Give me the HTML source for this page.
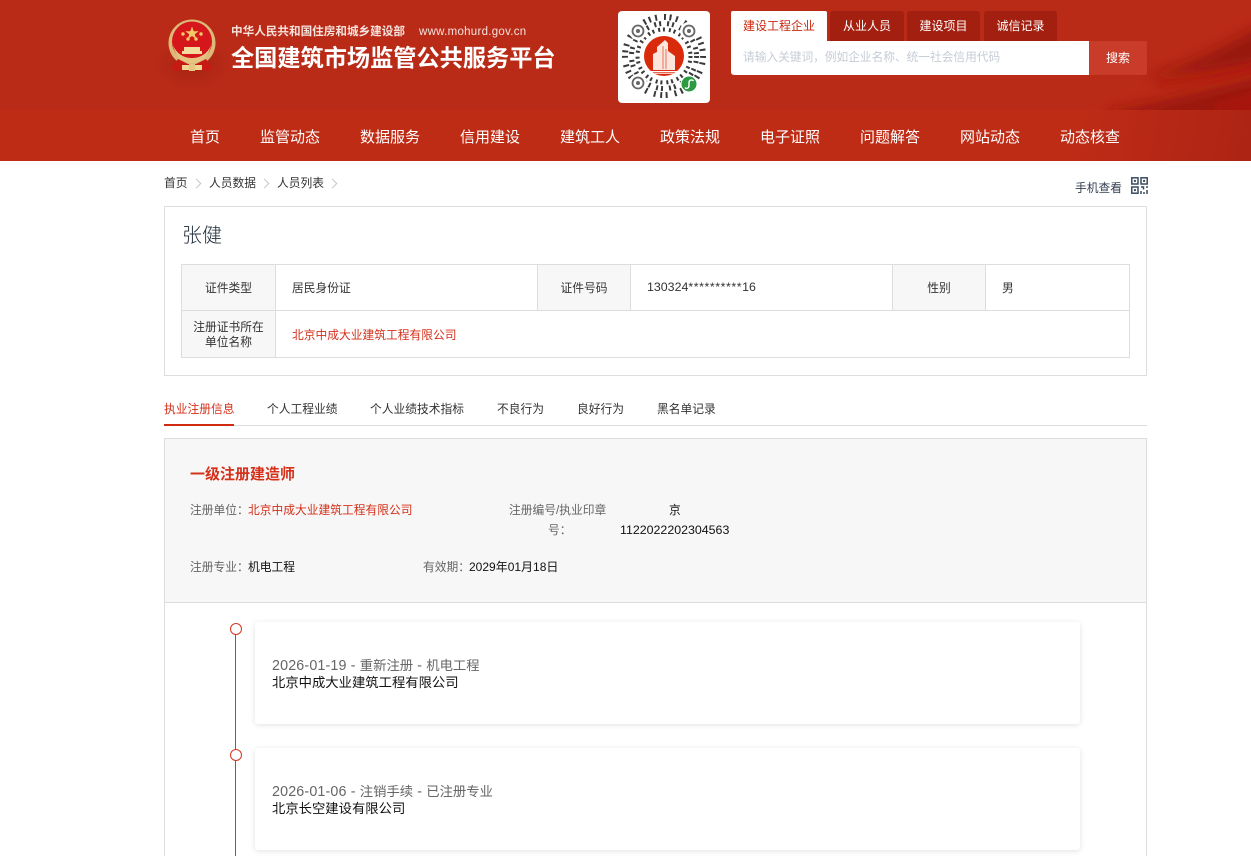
<!DOCTYPE html>
<html lang="zh-CN">
<head>
<meta charset="utf-8">
<title>全国建筑市场监管公共服务平台</title>
<style>
*{margin:0;padding:0;box-sizing:border-box}
html,body{width:1251px;height:856px;overflow:hidden;background:#fff}
body{position:relative;font-family:"Liberation Sans","Noto Sans CJK SC",sans-serif;font-size:11.75px;color:#333}
.a{position:absolute;white-space:nowrap}
.t{line-height:16px}
#hd{position:absolute;left:0;top:0;width:1251px;height:110px;background:#b92a17;overflow:hidden}
#nav{position:absolute;left:0;top:110px;width:1251px;height:51px;background:linear-gradient(100deg,#bf2c16 0,#bf2c16 85%,#ad2414 100%)}
#nav span{position:absolute;top:0;line-height:55px;font-size:15px;color:#fff;white-space:nowrap}
.tab{position:absolute;top:11px;height:30px;background:#a31f10;border-radius:3px 3px 0 0;color:#fff;text-align:center;line-height:31px;font-size:12px}
.b{position:absolute;background:#ddd}
.cell{position:absolute;display:flex;align-items:center;justify-content:center;text-align:center;background:#f7f7f7;color:#333;line-height:15px;padding-top:1px}
.red{color:#d5301a}
.lab{color:#666}
.k{color:#111}
.card{position:absolute;left:255px;width:825px;height:102px;background:#fff;border-radius:3px;box-shadow:0 1px 6px rgba(0,0,0,.12)}
.card div{position:absolute;left:17px;white-space:nowrap;font-size:13.33px;line-height:17px}
.card b{font-weight:400;font-size:14.3px;letter-spacing:.15px}
.chev{position:absolute;width:7px;height:7px;border-top:1px solid #c8c8c8;border-right:1px solid #c8c8c8;transform:rotate(45deg);top:179.5px}
</style>
</head>
<body>
<div id="hd">
<svg class="a" style="left:0;top:0" width="1251" height="110" viewBox="0 0 1251 110">
<defs>
<filter id="bl" x="-20%" y="-50%" width="140%" height="200%"><feGaussianBlur stdDeviation="6"/></filter>
<filter id="bs" x="-20%" y="-50%" width="140%" height="200%"><feGaussianBlur stdDeviation="3"/></filter>
<radialGradient id="gl"><stop offset="0" stop-color="#8e1a0c" stop-opacity=".4"/><stop offset="1" stop-color="#8e1a0c" stop-opacity="0"/></radialGradient>
</defs>
<path d="M1150 76C1190 66 1225 46 1270 22V60C1225 70 1190 74 1150 78Z" fill="#941709" opacity=".9" filter="url(#bl)"/>
<path d="M1110 112C1170 100 1215 88 1270 74V120H1110Z" fill="#981809" opacity=".9" filter="url(#bl)"/>
<path d="M1160 84C1190 80 1220 72 1260 62V68C1225 76 1190 84 1160 87Z" fill="#ad160c" opacity=".8" filter="url(#bs)"/>
<path d="M1215 102C1230 98 1245 94 1260 90V115H1215Z" fill="#aa120a" opacity=".8" filter="url(#bs)"/>
<ellipse cx="192" cy="64" rx="38" ry="26" fill="url(#gl)"/>
</svg>
<svg class="a" style="left:166px;top:18px" width="52" height="56" viewBox="0 0 52 56">
<circle cx="26" cy="25" r="23.5" fill="#dcb978"/>
<circle cx="26" cy="23.500" r="20" fill="#d5161a"/>
<path d="M7 27c2 11 10 18 19 18s17-7 19-18c-3 8-10 13-19 13S10 35 7 27Z" fill="#e6c583"/>
<path d="M26 8.500l1.700 4.700h5l-4 3 1.500 4.800-4.200-3-4.200 3 1.500-4.800-4-3h5Z" fill="#f0c968"/>
<circle cx="17" cy="16" r="1.700" fill="#f0c968"/><circle cx="35" cy="16" r="1.700" fill="#f0c968"/>
<circle cx="22" cy="21" r="1.700" fill="#f0c968"/><circle cx="30" cy="21" r="1.700" fill="#f0c968"/>
<path d="M16 36h20v-3h-2v-4H18v4h-2Z" fill="#f3dc9e"/>
<path d="M12 41l-7 9 6 3 8-3h14l8 3 6-3-7-9-10 5H22Z" fill="#c81a14"/>
<rect x="16" y="47" width="20" height="5" fill="#f0d591"/>
<rect x="23" y="46" width="6" height="7" fill="#e6c583"/>
</svg>
<div class="a" style="left:231px;top:23px;font-size:11.6px;line-height:17px;color:#f6e3dd;font-weight:700">中华人民共和国住房和城乡建设部</div>
<div class="a" style="left:419px;top:24px;font-size:11.5px;letter-spacing:.28px;line-height:17px;color:#f6e3dd">www.mohurd.gov.cn</div>
<div class="a" style="left:231px;top:42px;font-size:23.2px;line-height:33px;color:#fff;font-weight:700">全国建筑市场监管公共服务平台</div>

<div class="a" style="left:618px;top:11px;width:92px;height:92px;background:#fff;border-radius:4px"></div>
<svg class="a" style="left:618px;top:11px" width="92" height="92" viewBox="0 0 92 92" fill="none">
<circle cx="46" cy="45" r="39" stroke="#3a3a3a" stroke-width="6" stroke-dasharray="2 4.500 2 7 2 3.500"/>
<circle cx="46" cy="45" r="32.500" stroke="#3a3a3a" stroke-width="5" stroke-dasharray="2 3 2 6"/>
<circle cx="46" cy="45" r="26.500" stroke="#3a3a3a" stroke-width="4" stroke-dasharray="2 2.800 2 4"/>
<circle cx="46" cy="45" r="23" fill="#fff"/>
<circle cx="46" cy="45" r="20" fill="#d92a0c"/>
<path d="M35 59V43l4-2V36l8-7 3 3V40l7 5V59Z" fill="#fbe5dc"/>
<path d="M45 35v23M48 38v20" stroke="#e8735c" stroke-width="1"/>
<rect x="33" y="60" width="26" height="1.300" fill="#fff"/>
<rect x="36" y="62" width="20" height="1" fill="#f6c4b6"/>
<circle cx="20" cy="20" r="9" fill="#fff"/>
<circle cx="20" cy="20" r="5.500" stroke="#666" stroke-width="1.800"/><circle cx="20" cy="20" r="2" fill="#666"/>
<circle cx="71" cy="20" r="9" fill="#fff"/>
<circle cx="71" cy="20" r="5.500" stroke="#666" stroke-width="1.800"/><circle cx="71" cy="20" r="2" fill="#666"/>
<circle cx="20" cy="72" r="9" fill="#fff"/>
<circle cx="20" cy="72" r="5.500" stroke="#666" stroke-width="1.800"/><circle cx="20" cy="72" r="2" fill="#666"/>
<circle cx="71" cy="73" r="8.500" fill="#fff"/>
<circle cx="71" cy="73" r="7.500" fill="#2b9a41"/>
<path d="M67 76.500c1.500 2 4 .5 4-2v-3c0-2.500 3-3.500 4.500-1.500" stroke="#fff" stroke-width="1.400"/>
</svg>

<div class="tab" style="left:731px;width:96px;background:#fff;color:#c9290f;border-radius:2px 2px 0 0">建设工程企业</div>
<div class="tab" style="left:830px;width:74px">从业人员</div>
<div class="tab" style="left:907px;width:73px">建设项目</div>
<div class="tab" style="left:984px;width:73px">诚信记录</div>
<div class="a" style="left:731px;top:41px;width:358px;height:34px;background:#fff;border-radius:0 0 0 3px"></div>
<div class="a" style="left:743px;top:49px;line-height:17px;font-size:11.7px;color:#c6ccd6">请输入关键词&#xFF0C;例如企业名称、统一社会信用代码</div>
<div class="a" style="left:1089px;top:41px;width:58px;height:34px;background:#c93c2a;border-radius:0 2px 2px 0;color:#fff;text-align:center;line-height:34px;font-size:12px">搜索</div>
</div>

<div id="nav">
<span style="left:190px">首页</span><span style="left:260px">监管动态</span><span style="left:360px">数据服务</span><span style="left:460px">信用建设</span><span style="left:560px">建筑工人</span><span style="left:660px">政策法规</span><span style="left:760px">电子证照</span><span style="left:860px">问题解答</span><span style="left:960px">网站动态</span><span style="left:1060px">动态核查</span>
</div>

<div class="a t" style="left:164px;top:176px">首页</div><i class="chev" style="left:193px"></i>
<div class="a t" style="left:209px;top:176px">人员数据</div><i class="chev" style="left:261px"></i>
<div class="a t" style="left:277px;top:176px">人员列表</div><i class="chev" style="left:329px"></i>
<div class="a t" style="left:1075px;top:181px;color:#333f50">手机查看</div>
<svg class="a" style="left:1131px;top:177px" width="17" height="17" viewBox="0 0 17 17" fill="none" stroke="#3b4a5e" stroke-width="1.500">
<rect x=".8" y=".8" width="6.200" height="6.200"/><rect x="10" y=".8" width="6.200" height="6.200"/><rect x=".8" y="10" width="6.200" height="6.200"/>
<rect x="2.900" y="2.900" width="2" height="2" fill="#3b4a5e" stroke="none"/><rect x="12.100" y="2.900" width="2" height="2" fill="#3b4a5e" stroke="none"/><rect x="2.900" y="12.100" width="2" height="2" fill="#3b4a5e" stroke="none"/>
<path d="M10 10h2.500v2.500M15 10h2M10 14v3M13 15v2M16 13v4"/>
</svg>

<div class="a" style="left:164px;top:206px;width:983px;height:170px;border:1px solid #ddd"></div>
<div class="a" style="left:182px;top:222px;font-size:20px;line-height:29px;color:#1f2b3a;font-weight:300">张健</div>

<div class="cell" style="left:182px;top:265px;width:93px;height:45px">证件类型</div>
<div class="cell" style="left:538px;top:265px;width:92px;height:45px">证件号码</div>
<div class="cell" style="left:893px;top:265px;width:92px;height:45px">性别</div>
<div class="cell" style="left:182px;top:311px;width:93px;height:46px">注册证书所在<br>单位名称</div>
<div class="b" style="left:181px;top:264px;width:949px;height:1px"></div>
<div class="b" style="left:181px;top:310px;width:949px;height:1px"></div>
<div class="b" style="left:181px;top:357px;width:949px;height:1px"></div>
<div class="b" style="left:181px;top:264px;width:1px;height:94px"></div>
<div class="b" style="left:275px;top:264px;width:1px;height:94px"></div>
<div class="b" style="left:537px;top:264px;width:1px;height:47px"></div>
<div class="b" style="left:630px;top:264px;width:1px;height:47px"></div>
<div class="b" style="left:892px;top:264px;width:1px;height:47px"></div>
<div class="b" style="left:985px;top:264px;width:1px;height:47px"></div>
<div class="b" style="left:1129px;top:264px;width:1px;height:94px"></div>
<div class="a t" style="left:292px;top:281px">居民身份证</div>
<div class="a t" style="left:647px;top:279px;font-size:12.4px">130324<span style="letter-spacing:.55px">**********</span>16</div>
<div class="a t" style="left:1002px;top:281px">男</div>
<div class="a t red" style="left:292px;top:328px">北京中成大业建筑工程有限公司</div>

<div class="b" style="left:164px;top:425px;width:983px;height:1px"></div>
<div class="a" style="left:164px;top:424px;width:70px;height:2px;background:#d02a10"></div>
<div class="a t red" style="left:164px;top:402px">执业注册信息</div>
<div class="a t" style="left:267px;top:402px">个人工程业绩</div>
<div class="a t" style="left:370px;top:402px">个人业绩技术指标</div>
<div class="a t" style="left:497px;top:402px">不良行为</div>
<div class="a t" style="left:577px;top:402px">良好行为</div>
<div class="a t" style="left:657px;top:402px">黑名单记录</div>

<div class="a" style="left:164px;top:438px;width:983px;height:165px;background:#f7f7f7;border:1px solid #ddd"></div>
<div class="a" style="left:164px;top:603px;width:1px;height:253px;background:#ddd"></div>
<div class="a" style="left:1146px;top:603px;width:1px;height:253px;background:#ddd"></div>
<div class="a red" style="left:190px;top:464px;font-size:15px;line-height:22px;font-weight:700">一级注册建造师</div>
<div class="a t lab" style="left:190px;top:503px">注册单位&#xFF1A;</div>
<div class="a t red" style="left:248px;top:503px">北京中成大业建筑工程有限公司</div>
<div class="a t lab" style="left:509px;top:503px">注册编号/执业印章</div>
<div class="a t lab" style="left:548px;top:523px">号&#xFF1A;</div>
<div class="a t k" style="left:669px;top:503px">京</div>
<div class="a t k" style="left:620px;top:522px;font-size:12.4px">1122022202304563</div>
<div class="a t lab" style="left:190px;top:560px">注册专业&#xFF1A;</div>
<div class="a t k" style="left:248px;top:560px">机电工程</div>
<div class="a t lab" style="left:423px;top:560px">有效期&#xFF1A;</div>
<div class="a t k" style="left:469px;top:559px;font-size:12px">2029年01月18日</div>

<div class="a" style="left:235px;top:634px;width:1.4px;height:222px;background:#cf3a25"></div>
<div class="a" style="left:229.700px;top:623.300px;width:12px;height:12px;border:1.300px solid #d5351f;border-radius:50%;background:#fff"></div>
<div class="a" style="left:229.700px;top:749.300px;width:12px;height:12px;border:1.300px solid #d5351f;border-radius:50%;background:#fff"></div>

<div class="card" style="top:622px">
<div style="top:35px;color:#666"><b>2026-01-19 - </b>重新注册<b> - </b>机电工程</div>
<div style="top:52px;color:#111">北京中成大业建筑工程有限公司</div>
</div>
<div class="card" style="top:748px">
<div style="top:35px;color:#666"><b>2026-01-06 - </b>注销手续<b> - </b>已注册专业</div>
<div style="top:52px;color:#111">北京长空建设有限公司</div>
</div>
</body>
</html>
